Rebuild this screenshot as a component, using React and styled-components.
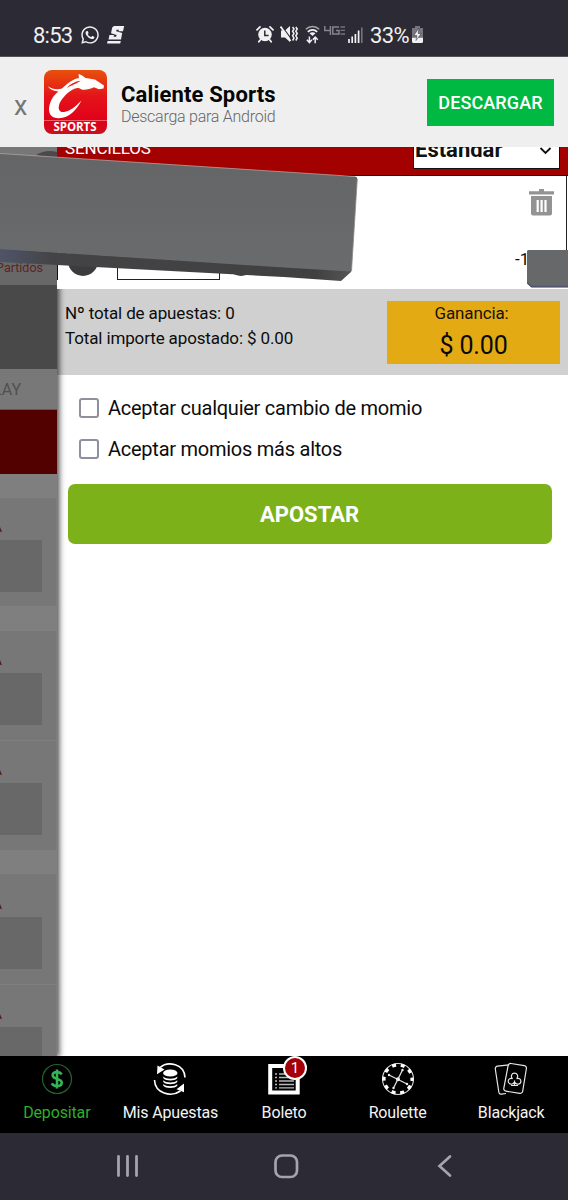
import React from "react";
import styled, { createGlobalStyle } from "styled-components";
import { FaWhatsapp } from "react-icons/fa";

const GlobalStyle = createGlobalStyle`
  * {
    box-sizing: border-box;
  }
  body {
    margin: 0;
    font-family: Roboto, sans-serif;
    color: #0c0c0c;
  }
`;
const Screen = styled.div`
  width: 568px;
  height: 1200px;
  display: flex;
  flex-direction: column;
  overflow: hidden;
  background-color: white;
`;

/* status bar */
const StatusBar = styled.div`
  height: 57px;
  flex: none;
  display: flex;
  justify-content: space-between;
  padding: 23px 145px 0 33px;
  border-bottom: 1px solid #55535a;
  background-color: #2c2a34;
  color: #f1f1f3;
  font-size: 22px;
  line-height: 25px;
  white-space: nowrap;
`;
const StatusGroup = styled.div`
  display: flex;
  align-items: flex-start;
  svg {
    flex: none;
    display: block;
  }
`;
const Clock = styled.span`
  width: 47px;
  letter-spacing: -0.75px;
`;
const Battery = styled.span`
  width: 42px;
  letter-spacing: -0.6px;
`;

/* app banner */
const Banner = styled.div`
  height: 90px;
  flex: none;
  display: flex;
  padding: 0 14px;
  background-color: #efefef;
`;
const CloseBtn = styled.button`
  width: 30px;
  padding: 7px 0 0;
  border: none;
  background: none;
  text-align: left;
  font-family: Roboto, sans-serif;
  font-size: 27px;
  color: #777;
`;
const BannerText = styled.div`
  width: 320px;
  padding: 24px 0 0 14px;
`;
const AppName = styled.div`
  font-size: 22px;
  font-weight: 700;
  line-height: 28px;
  letter-spacing: 0.15px;
  color: #050505;
`;
const AppInfo = styled.div`
  font-size: 16px;
  font-weight: 300;
  line-height: 16px;
  letter-spacing: -0.25px;
  color: #666;
`;
const DownloadBtn = styled.button`
  width: 127px;
  height: 47px;
  margin-top: 22px;
  padding: 0;
  border: none;
  background-color: #00b943;
  color: white;
  font-family: Roboto, sans-serif;
  font-size: 18px;
  font-weight: 500;
  letter-spacing: 0.1px;
`;

/* body */
const Body = styled.div`
  height: 909px;
  flex: none;
  display: flex;
  position: relative;
  overflow: hidden;
`;
const Backdrop = styled.div`
  width: 57px;
  flex: none;
  position: relative;
  z-index: 1;
  background-color: #7f7f7f;
  box-shadow: 1px 0 6px 1px rgba(0, 0, 0, 0.75);
`;
const Strip = styled.div`
  height: ${(p) => p.$h}px;
  background-color: ${(p) => p.$bg};
`;
const Matches = styled(Strip)`
  display: flex;
  align-items: flex-end;
  justify-content: flex-end;
  padding: 0 14px 10px 0;
  font-size: 12.5px;
  line-height: 15px;
  color: #5e2323;
`;
const PlayTab = styled(Strip)`
  display: flex;
  align-items: center;
  justify-content: flex-end;
  padding-right: 36px;
  border-bottom: 1px solid #6c5454;
  font-size: 16px;
  color: #505050;
`;
const Card = styled.div`
  height: ${(p) => p.$h}px;
  padding-top: ${(p) => p.$top}px;
  background-color: #777;
  border-top: 1px solid #808080;
  border-right: 1px solid #7d7d7d;
  overflow: hidden;
`;
const CardLetter = styled.div`
  height: 20px;
  display: flex;
  justify-content: flex-end;
  width: 2px;
  font-size: 13px;
  line-height: 16px;
  color: #4d0808;
`;
const CardOdd = styled.div`
  width: 42px;
  height: 52px;
  background-color: #686868;
`;

const Slip = styled.div`
  width: 511px;
  background-color: white;
`;
const SlipHeader = styled.div`
  height: 29px;
  display: flex;
  justify-content: space-between;
  position: relative;
  z-index: 2;
  padding: 0 8px;
  background-color: #a30000;
  border-bottom: 1px solid #1a0000;
  color: white;
  font-size: 17px;
  line-height: 20px;
`;
const SlipTitle = styled.span`
  margin-top: -9px;
  letter-spacing: -0.15px;
`;
const StakeType = styled.div`
  width: 147px;
  height: 22px;
  display: flex;
  justify-content: space-between;
  padding: 0 7px 0 1px;
  border: solid #111;
  border-width: 0 1px 1px;
  background-color: white;
  color: #111;
  font-size: 22px;
  font-weight: 700;
  line-height: 24px;
  span {
    margin-top: -9px;
  }
`;
const Bet = styled.div`
  height: 113px;
  display: flex;
  justify-content: space-between;
  position: relative;
  z-index: 2;
  background-color: white;
`;
const StakeRow = styled.div`
  height: 104px;
  display: flex;
  align-items: flex-end;
  padding-left: 10px;
  border-left: 1px solid #111;
`;
const StakeDot = styled.div`
  width: 30px;
  height: 30px;
  margin-bottom: 4px;
  border-radius: 50%;
  background-color: #3c3c3e;
`;
const StakeInput = styled.div`
  width: 103px;
  height: 40px;
  margin: 0 6px 0 19px;
  border: 1.5px solid #222;
`;
const BetSide = styled.div`
  width: 55px;
  height: 104px;
  margin-right: 1px;
  padding-top: 13px;
  border-right: 1px solid #222;
  svg {
    display: block;
    margin-left: 17px;
  }
`;
const Odds = styled.div`
  margin: 33px 0 0 3px;
  font-size: 17px;
  line-height: 20px;
`;
const Totals = styled.div`
  height: 86px;
  display: flex;
  justify-content: space-between;
  padding: 12px 8px 0;
  background-color: #d0d0d0;
  font-size: 17px;
  line-height: 25px;
  letter-spacing: -0.13px;
`;
const Gain = styled.div`
  width: 173px;
  height: 63px;
  text-align: center;
  background-color: #e4aa14;
  color: #17110a;
  line-height: 24px;
`;
const GainLabel = styled.div`
  padding-right: 4px;
`;
const GainValue = styled.div`
  font-size: 25px;
  line-height: 41px;
  color: #0c0804;
`;
const Options = styled.div`
  padding: 13px 0 0 22px;
`;
const Option = styled.label`
  height: 40.5px;
  display: flex;
  align-items: center;
  font-size: 20px;
  letter-spacing: -0.25px;
`;
const Checkbox = styled.span`
  width: 20px;
  height: 20px;
  margin-right: 9px;
  border: 2px solid #8f8f9d;
  border-radius: 3px;
`;
const BetBtn = styled.button`
  width: 484px;
  height: 60px;
  margin: 15px 0 0 11px;
  padding: 0 1px 0 0;
  border: none;
  border-radius: 7px;
  background-color: #7cb11a;
  color: white;
  font-family: Roboto, sans-serif;
  font-size: 22px;
  font-weight: 700;
`;
const Slabs = styled.svg`
  position: absolute;
  left: 0;
  top: 0;
  z-index: 3;
`;

/* bottom bars */
const TabBar = styled.div`
  height: 77px;
  flex: none;
  display: grid;
  grid-template-columns: repeat(5, 1fr);
  background-color: black;
`;
const Tab = styled.div`
  display: flex;
  flex-direction: column;
  align-items: center;
  padding-top: 6px;
  font-size: 16px;
  line-height: 20px;
  letter-spacing: -0.15px;
  color: ${(p) => (p.$active ? "#2fae2b" : "#f4f4f4")};
  svg {
    display: block;
    margin-bottom: 7px;
  }
`;
const TabIcon = styled.div`
  position: relative;
`;
const Badge = styled.span`
  position: absolute;
  left: 15px;
  top: -6px;
  width: 24px;
  height: 24px;
  border: 2px solid white;
  border-radius: 50%;
  background-color: #a30008;
  color: white;
  text-align: center;
  font-size: 15px;
  line-height: 20px;
`;
const NavBar = styled.div`
  height: 67px;
  flex: none;
  display: flex;
  align-items: center;
  justify-content: space-between;
  padding: 0 112px 1px;
  background-color: #2c2a34;
`;

const AlarmIcon = () => (
  <svg width="18" height="18" viewBox="0 0 18 18" style={{ marginTop: 2 }}>
    <circle cx="9" cy="9.500" r="6.800" fill="#f1f1f3" />
    <path d="M1 4.800 4 1.900M17 4.800 14 1.900M4.200 15 2.800 16.800M13.800 15l1.400 1.800" stroke="#f1f1f3" strokeWidth="1.800" strokeLinecap="round" />
    <path d="M8.800 5.500v5h3.800" stroke="#2c2a34" strokeWidth="1.500" fill="none" />
  </svg>
);
const MuteIcon = () => (
  <svg width="18" height="18" viewBox="0 0 18 18" style={{ margin: "2px 0 0 6px" }}>
    <path d="M1 5.500h4L10 1v16l-5-4.500H1z" fill="#f1f1f3" />
    <path d="M1.800 1 12 14.800" stroke="#2c2a34" strokeWidth="1.200" />
    <path d="M0.600 1.600 10.600 16" stroke="#f1f1f3" strokeWidth="1.700" />
    <path d="M12.600 2l1.400 2-1.400 2.200 1.400 2.300-1.400 2.300 1.400 2.300-1.400 2.400M15.800 2l1.400 2-1.400 2.200 1.400 2.300-1.400 2.300 1.400 2.300-1.400 2.400" fill="none" stroke="#f1f1f3" strokeWidth="1.500" />
  </svg>
);
const WifiIcon = () => (
  <svg width="15" height="19" viewBox="0 0 15 19" style={{ margin: "2px 0 0 7px" }}>
    <path d="M0.800 4.300C4.600 0.500 10.400 0.500 14.200 4.300" fill="none" stroke="#a5a4a9" strokeWidth="1.500" />
    <path d="M2.800 6.800c2.700-2.500 6.700-2.500 9.400 0" fill="none" stroke="#f1f1f3" strokeWidth="1.700" />
    <path d="M4.500 8.300c1.800-1.500 4.200-1.500 6 0l-3 2.800z" fill="#f1f1f3" />
    <path d="M4.400 11.500v6M1.900 14.800l2.500 2.900 2.500-2.900M10.200 18.300v-6M7.800 14.800l2.400-2.700 2.500 2.700" fill="none" stroke="#f1f1f3" strokeWidth="1.500" />
  </svg>
);
const LteIcon = () => (
  <svg width="21" height="10" viewBox="0 0 21 10" style={{ margin: "3px 0 0 4px" }}>
    <path d="M0.800 0v4.600H7M6.400 0v9M15 1H8.800v7H15V4.600h-3" fill="none" stroke="#85838b" strokeWidth="1.500" />
    <path d="M16.500 1H21M16.500 4.400H21M16.500 8H21" stroke="#75737b" strokeWidth="1.400" />
  </svg>
);
const SignalIcon = () => (
  <svg width="15" height="16" viewBox="0 0 15 16" style={{ margin: "4px 7px 0 3px" }}>
    <path d="M1 16v-4M4.200 16v-6.500M7.400 16V7M10.600 16V3.500" stroke="#f1f1f3" strokeWidth="1.700" />
    <path d="M13.800 16V0.500" stroke="#76747c" strokeWidth="1.600" />
  </svg>
);
const BatteryIcon = () => (
  <svg width="11" height="17" viewBox="0 0 11 17" style={{ marginTop: 3 }}>
    <path d="M3 0h5v2h3v9H0V2h3z" fill="#77757d" />
    <path d="M0 11.500h11v4a1.500 1.500 0 0 1-1.500 1.500h-8A1.500 1.500 0 0 1 0 15.500z" fill="#f1f1f3" />
    <path d="M7 2 1.800 9.500h3L4 14.500 9.200 7.500H6.200z" fill="#f1f1f3" stroke="#2c2a34" strokeWidth="0.500" />
  </svg>
);
const ScoreIcon = () => (
  <svg width="18" height="18" viewBox="0 0 18 18" style={{ margin: "3px 0 0 7px" }}>
    <path d="M17.200 0 16 5.200h-4.500l.4-1.500H9.500L9.200 5.200l6 1.800L14 13.500H1.500L2.500 9H7l-.4 1.800h2.600l.4-1.700L4 7.200 5.200 1.500 7 0z" fill="#f1f1f3" />
    <path d="M0.600 15h13.200l-.6 2.500H0z" fill="#f1f1f3" />
  </svg>
);

const AppLogo = () => (
  <svg width="63" height="64" viewBox="0 0 63 64" style={{ marginTop: 13, flex: "none" }}>
    <defs>
      <linearGradient id="logo" x1="0" y1="0" x2="0" y2="1">
        <stop offset="0" stopColor="#e8500c" />
        <stop offset="0.4" stopColor="#e4151a" />
        <stop offset="0.78" stopColor="#e2001a" />
        <stop offset="1" stopColor="#c9101b" />
      </linearGradient>
    </defs>
    <rect width="63" height="64" rx="8" fill="url(#logo)" />
    <path
      d="M3.700 16.300C8 19 13 20 18 18.500C23 13.500 29 9 35 8L34.500 4C37.500 5 40 6.500 41.500 8L51 9.500L60 15.500L59.500 18.500L55 19.300L50 17.300C46 19.500 41 20 37.500 19.500C36 18 33.500 17.500 31 18.500C24 21.500 18 28 15.500 33.500C13.500 39.500 15.500 42.500 20 42C26 41.500 32 36 37.500 30.500C33 39.500 25 48 15 48.300C8 48.500 4.700 44.500 5 38.500C5.500 31.500 9.500 25 14.500 21.500C10 21.500 6 19.500 3.700 16.300Z"
      fill="white"
    />
    <path d="M22.500 18.300C26 14 31 11.500 36.500 10.800C33.500 13.500 28 15 22.500 18.300Z" fill="#e2261a" />
    <path d="M0 50.500h63" stroke="#f17a7c" strokeWidth="0.800" />
    <text x="31" y="61" textAnchor="middle" textLength="43" fill="white" fontFamily="Open Sans, sans-serif" fontSize="11.500" fontWeight="700">
      SPORTS
    </text>
  </svg>
);
const TrashIcon = () => (
  <svg width="25" height="27" viewBox="0 0 25 27">
    <path d="M0 2.200h10V0h5v2.200h10v3.300H0zM2 7h21v17.500a2 2 0 0 1-2 2H4a2 2 0 0 1-2-2z" fill="#939393" />
    <path d="M8.700 11v12M12.600 11v12M16.500 11v12" stroke="white" strokeWidth="2.200" />
  </svg>
);

const DepositIcon = () => (
  <svg width="32" height="34" viewBox="0 0 32 34">
    <circle cx="16" cy="17" r="14.500" fill="none" stroke="#24632f" strokeWidth="1.200" />
    <path d="M20.500 12.500C19.500 10.500 18 10 16 10c-2.600 0-4.300 1.200-4.300 3.200 0 4.800 9 2.600 9 7.300 0 2.200-1.900 3.600-4.700 3.600-2.400 0-4.200-.9-5.200-2.800M16 7.500v19" fill="none" stroke="#34b558" strokeWidth="2.600" />
  </svg>
);
const BetsIcon = () => (
  <svg width="34" height="34" viewBox="0 0 34 34">
    <path d="M7 5.500C15-1.500 31.500 2 32 15.500M1.500 18C2 31.500 18 35.500 27.500 29" fill="none" stroke="white" strokeWidth="1.600" />
    <path d="M4.500 3.500 11.500 7.500 4 12.200zM31 21.500v8.800l-7.500-3z" fill="white" />
    <ellipse cx="17.300" cy="11" rx="7.200" ry="3.600" fill="white" />
    <path d="M10.300 14.500c2.500 3 11.500 3 14 0v1.800c-2.500 3-11.500 3-14 0zM10.300 18.200c2.500 3 11.500 3 14 0v1.800c-2.500 3-11.500 3-14 0zM10.300 21.900c2.500 3 11.500 3 14 0v1.800c-2.500 3-11.500 3-14 0z" fill="white" />
  </svg>
);
const SlipIcon = () => (
  <svg width="32" height="34" viewBox="0 0 32 34">
    <path d="M2.200 4h27.500v26.500H2.200z" fill="none" stroke="white" strokeWidth="4" />
    <path d="M16 2h14v8H16z" fill="white" />
    <path d="M7 12h2M7 15.500h2M7 19h2M7 22.500h2M7 25.800h2M11 12h15M11 15.500h15M11 19h15M11 22.500h15M11 25.800h15" stroke="#bbb" strokeWidth="1.300" />
  </svg>
);
const RouletteIcon = () => (
  <svg width="34" height="34" viewBox="0 0 34 34">
    <circle cx="17" cy="17" r="15.500" fill="none" stroke="#ddd" strokeWidth="1.100" />
    <circle cx="17" cy="17" r="14" fill="none" stroke="white" strokeWidth="3.200" strokeDasharray="4 4.796" strokeDashoffset="2" />
    <path d="M12.500 26 21.500 8M8 13l18 9" stroke="#ddd" strokeWidth="1.300" />
    <circle cx="17" cy="17.200" r="2" fill="#eee" />
    <circle cx="21.500" cy="8" r="1.200" fill="#eee" />
    <circle cx="12.500" cy="26" r="1.200" fill="#eee" />
    <circle cx="8" cy="13" r="1.200" fill="#eee" />
    <circle cx="26" cy="22" r="1.200" fill="#eee" />
  </svg>
);
const BlackjackIcon = () => (
  <svg width="34" height="34" viewBox="0 0 34 34" fill="none" stroke="#e6e6e6" strokeWidth="1.200">
    <path d="M15 2.800 3.500 4.200A2.500 2.500 0 0 0 1.300 7L4.800 30a2.500 2.500 0 0 0 2.800 2.200L12 31.500" />
    <path d="M17 1.500 30.300 3.600a2.500 2.500 0 0 1 2.100 2.900L28.700 29.200a2.500 2.500 0 0 1-2.900 2.100L11.900 29.200a2.500 2.500 0 0 1-2.100-2.900L14.100 3.600A2.500 2.500 0 0 1 17 1.500z" />
    <path d="M19.800 20.500c-1 2.600-5.600 2-5.600-1.200 0-2.400 2.400-3.600 4.300-2.500-2.200-2.600-.8-5.600 2-5.600s4.200 3 2.200 5.600c2-1 4.200.2 4.200 2.500 0 3.200-4.600 3.800-5.600 1.200M20.500 18.500v5M17 23.500h7M18.500 22l2-1.500 2 1.500" />
  </svg>
);

const cards = [
  { height: 109, gap: 24, top: 22 },
  { height: 110, gap: 0, top: 22 },
  { height: 110, gap: 23, top: 22 },
  { height: 111, gap: 0, top: 23 },
  { height: 80, gap: 0, top: 22 },
];

export default function App() {
  return (
    <>
      <GlobalStyle />
      <Screen>
        <StatusBar>
          <StatusGroup>
            <Clock>8:53</Clock>
            <FaWhatsapp size={20} style={{ marginTop: 2 }} />
            <ScoreIcon />
          </StatusGroup>
          <StatusGroup>
            <AlarmIcon />
            <MuteIcon />
            <WifiIcon />
            <LteIcon />
            <SignalIcon />
            <Battery>33%</Battery>
            <BatteryIcon />
          </StatusGroup>
        </StatusBar>

        <Banner>
          <CloseBtn>x</CloseBtn>
          <AppLogo />
          <BannerText>
            <AppName>Caliente Sports</AppName>
            <AppInfo>Descarga para Android</AppInfo>
          </BannerText>
          <DownloadBtn>DESCARGAR</DownloadBtn>
        </Banner>

        <Body>
          <Backdrop>
            <Strip $h={60} $bg="#777" />
            <Matches $h={78} $bg="#686868">
              Partidos
            </Matches>
            <Strip $h={84} $bg="#494949" />
            <PlayTab $h={41} $bg="#787878">
              PLAY
            </PlayTab>
            <Strip $h={64} $bg="#520000" />
            <Strip $h={23} $bg="#7f7f7f" />
            {cards.map((card, i) => (
              <React.Fragment key={i}>
                <Card $h={card.height} $top={card.top}>
                  <CardLetter>A</CardLetter>
                  <CardOdd />
                </Card>
                <Strip $h={card.gap} $bg="#7f7f7f" />
              </React.Fragment>
            ))}
          </Backdrop>

          <Slip>
            <SlipHeader>
              <SlipTitle>SENCILLOS</SlipTitle>
              <StakeType>
                <span>Estandar</span>
                <svg width="13" height="8" viewBox="0 0 13 8">
                  <path d="M1.500 1 6.500 6 11.500 1" fill="none" stroke="#111" strokeWidth="1.800" />
                </svg>
              </StakeType>
            </SlipHeader>
            <Bet>
              <StakeRow>
                <StakeDot />
                <StakeInput />
                <StakeDot />
              </StakeRow>
              <BetSide>
                <TrashIcon />
                <Odds>-110</Odds>
              </BetSide>
            </Bet>
            <Totals>
              <div>
                <div>Nº total de apuestas: 0</div>
                <div>Total importe apostado: $ 0.00</div>
              </div>
              <Gain>
                <GainLabel>Ganancia:</GainLabel>
                <GainValue>$ 0.00</GainValue>
              </Gain>
            </Totals>
            <Options>
              <Option>
                <Checkbox />
                Aceptar cualquier cambio de momio
              </Option>
              <Option>
                <Checkbox />
                Aceptar momios más altos
              </Option>
            </Options>
            <BetBtn>APOSTAR</BetBtn>
          </Slip>

          <Slabs width="568" height="150" viewBox="0 147 568 150">
            <defs>
              <linearGradient id="face" x1="0" y1="0" x2="0" y2="1">
                <stop offset="0" stopColor="#646566" />
                <stop offset="1" stopColor="#6a6b6d" />
              </linearGradient>
              <linearGradient id="edge" x1="0" y1="0" x2="1" y2="0">
                <stop offset="0" stopColor="#4f5468" />
                <stop offset="0.150" stopColor="#444446" />
                <stop offset="0.900" stopColor="#404041" />
                <stop offset="1" stopColor="#555657" />
              </linearGradient>
            </defs>
            <path d="M36 155q10-6 21-3v7z" fill="#4a4a4c" />
            <path d="M0 249 351 270v2L341 281 284 277 0 262z" fill="url(#edge)" />
            <path d="M0 153.500 355 176.500Q357.500 177 357.300 179L351.500 271.500 284 267.500 0 249z" fill="url(#face)" />
            <path d="M0 153.500 355 176.500" stroke="#b3a09d" strokeWidth="0.800" />
            <path d="M357.300 179 351.500 271" stroke="#8b8c8e" strokeWidth="0.800" />
            <path d="M528 250h40v37.500H531.500L527 283.500V251z" fill="#66686a" />
            <path d="M527.500 283 531.500 286.500H568" fill="none" stroke="#50546c" strokeWidth="1.600" />
          </Slabs>
        </Body>

        <TabBar>
          <Tab $active>
            <DepositIcon />
            Depositar
          </Tab>
          <Tab>
            <BetsIcon />
            Mis Apuestas
          </Tab>
          <Tab>
            <TabIcon>
              <SlipIcon />
              <Badge>1</Badge>
            </TabIcon>
            Boleto
          </Tab>
          <Tab>
            <RouletteIcon />
            Roulette
          </Tab>
          <Tab>
            <BlackjackIcon />
            Blackjack
          </Tab>
        </TabBar>
        <NavBar>
          <svg width="32" height="24" viewBox="0 0 32 24">
            <path d="M6.500 2.500v19M15.500 2.500v19M24.500 2.500v19" stroke="#a5a3ab" strokeWidth="2.800" strokeLinecap="round" />
          </svg>
          <svg width="32" height="26" viewBox="0 0 32 26">
            <rect x="2.500" y="2.500" width="21.500" height="21.500" rx="6.500" fill="none" stroke="#a5a3ab" strokeWidth="2.700" />
          </svg>
          <svg width="22" height="24" viewBox="0 0 22 24">
            <path d="M16 2.500 5.500 12 16 21.500" fill="none" stroke="#a5a3ab" strokeWidth="2.700" strokeLinecap="round" />
          </svg>
        </NavBar>
      </Screen>
    </>
  );
}
